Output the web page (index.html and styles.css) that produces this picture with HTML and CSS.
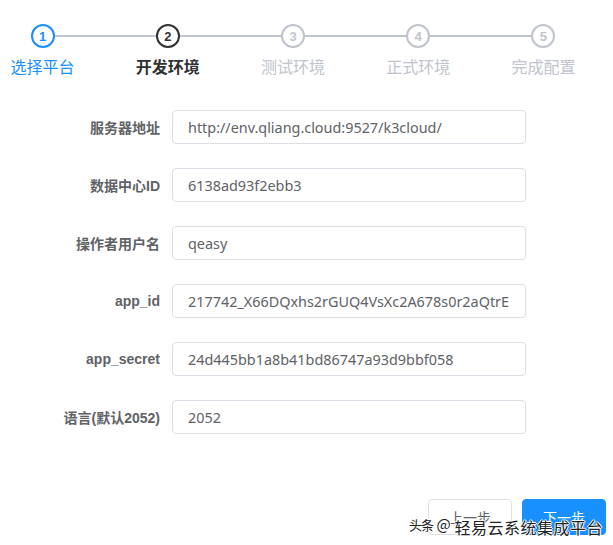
FILE: index.html
```html
<!DOCTYPE html>
<html lang="zh-CN">
<head>
  <meta charset="UTF-8" />
  <title>开发环境配置</title>
  <link rel="stylesheet" href="styles.css">
</head>
<body>
  <div class="page">
    <div class="steps">
      <div class="step done">
        <div class="step-head"><span class="step-line"></span><span class="step-icon">1</span></div>
        <div class="step-title">选择平台</div>
      </div>
      <div class="step active">
        <div class="step-head"><span class="step-line"></span><span class="step-icon">2</span></div>
        <div class="step-title">开发环境</div>
      </div>
      <div class="step">
        <div class="step-head"><span class="step-line"></span><span class="step-icon">3</span></div>
        <div class="step-title">测试环境</div>
      </div>
      <div class="step">
        <div class="step-head"><span class="step-line"></span><span class="step-icon">4</span></div>
        <div class="step-title">正式环境</div>
      </div>
      <div class="step last">
        <div class="step-head"><span class="step-icon">5</span></div>
        <div class="step-title">完成配置</div>
      </div>
    </div>

    <form class="env-form">
      <div class="form-row">
        <label>服务器地址</label>
        <input type="text" value="http://env.qliang.cloud:9527/k3cloud/"/>
      </div>
      <div class="form-row">
        <label>数据中心ID</label>
        <input type="text" value="6138ad93f2ebb3"/>
      </div>
      <div class="form-row">
        <label>操作者用户名</label>
        <input type="text" value="qeasy"/>
      </div>
      <div class="form-row">
        <label>app_id</label>
        <input type="text" value="217742_X66DQxhs2rGUQ4VsXc2A678s0r2aQtrE"/>
      </div>
      <div class="form-row">
        <label>app_secret</label>
        <input type="text" value="24d445bb1a8b41bd86747a93d9bbf058"/>
      </div>
      <div class="form-row">
        <label>语言(默认2052)</label>
        <input type="text" value="2052"/>
      </div>
    </form>

    <div class="footer">
      <button type="button" class="btn">上一步</button>
      <button type="button" class="btn btn-primary">下一步</button>
    </div>

    <div class="watermark"><span class="wm-site">头条</span> @<span class="wm-name">轻易云系统集成平台</span></div>
  </div>
</body>
</html>
```

FILE: styles.css
```css
html, body {
  margin: 0;
  height: 100%;
  overflow: hidden;
}
body {
  font-family: "Noto Sans", "Noto Sans CJK SC", sans-serif;
  background: #fff;
  color: #606266;
}
.page {
  position: relative;
  height: 545px;
}
.steps {
  display: flex;
  width: 626px;
  margin-left: -20px;
  padding-top: 24px;
}
.step {
  flex: 1;
  display: flex;
  flex-direction: column;
  align-items: center;
  color: #c0c4cc;
}
.step-head {
  position: relative;
  width: 100%;
  height: 24px;
  display: flex;
  justify-content: center;
}
.step-line {
  position: absolute;
  left: 50%;
  right: -50%;
  top: 11px;
  height: 2px;
  background: #c0c4cc;
}
.step-icon {
  position: relative;
  z-index: 1;
  box-sizing: border-box;
  width: 24px;
  height: 24px;
  border: 2px solid #c0c4cc;
  border-radius: 50%;
  background: #fff;
  display: flex;
  align-items: center;
  justify-content: center;
  font-family: "Liberation Sans", Arial, sans-serif;
  font-size: 13px;
  font-weight: bold;
}
.step-title {
  margin-top: 7px;
  font-size: 16px;
  line-height: 22px;
  font-family: "Noto Sans CJK SC", sans-serif;
}
.step.done { color: #1890ff; }
.step.done .step-icon { border-color: #1890ff; }
.step.active { color: #303133; }
.step.active .step-icon { border-color: #303133; }
.step.active .step-title { font-weight: bold; }

.env-form {
  margin-top: 33px;
  display: flex;
  flex-direction: column;
  gap: 24px;
}
.form-row {
  display: flex;
  align-items: center;
}
.form-row label {
  width: 160px;
  padding-right: 12px;
  text-align: right;
  font-size: 14px;
  font-weight: bold;
  color: #606266;
  font-family: "Liberation Sans", "Noto Sans CJK SC", sans-serif;
}
.form-row input {
  box-sizing: border-box;
  width: 354px;
  height: 34px;
  padding: 0 15px;
  border: 1px solid #dcdfe6;
  border-radius: 4px;
  font-family: "Noto Sans", sans-serif;
  font-size: 14.4px;
  color: #606266;
  outline: none;
}

.footer {
  position: absolute;
  top: 499px;
  right: 7px;
  display: flex;
  gap: 10px;
}
.btn {
  width: 84px;
  height: 36px;
  border: 1px solid #dcdfe6;
  border-radius: 4px;
  background: #fff;
  color: #606266;
  font-family: "Noto Sans CJK SC", sans-serif;
  font-size: 14px;
  cursor: pointer;
}
.btn-primary {
  background: #1890ff;
  border-color: #1890ff;
  color: #fff;
}

.watermark {
  position: absolute;
  left: 409px;
  top: 511px;
  font-family: "Noto Sans CJK SC", sans-serif;
  font-size: 15px;
  color: #222;
  white-space: nowrap;
  text-shadow: 1px 0 #fff, -1px 0 #fff, 0 1px #fff, 0 -1px #fff;
}
.wm-site {
  font-size: 13px;
  letter-spacing: -1px;
}
.wm-name {
  position: relative;
  top: 4px;
  margin-left: 4px;
  font-size: 16px;
  letter-spacing: 0.5px;
}
```
